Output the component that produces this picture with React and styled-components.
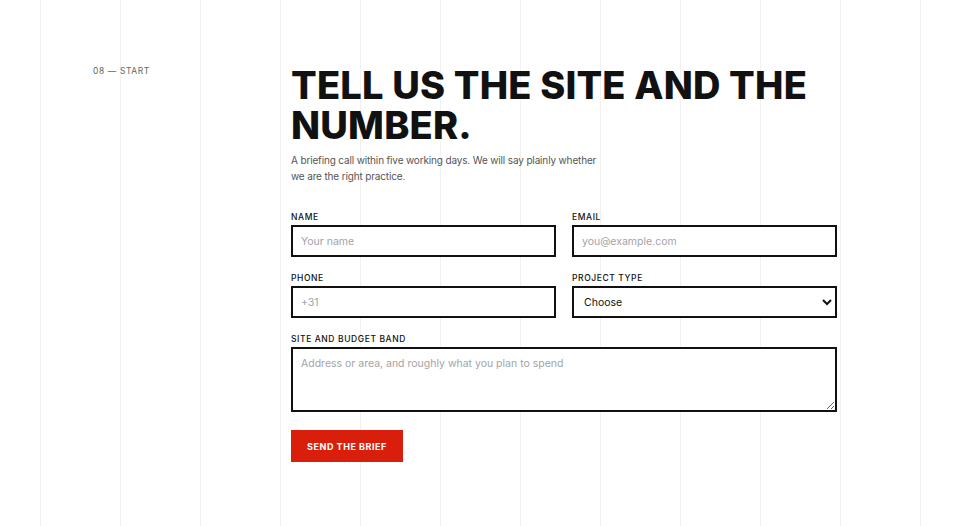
import React from "react";
import styled, { createGlobalStyle } from "styled-components";

const GlobalStyle = createGlobalStyle`
  * { box-sizing: border-box; }
  html, body { margin: 0; padding: 0; }
  body {
    background-color: #fff;
    background-image: repeating-linear-gradient(
      to right,
      #f1f1f1 0,
      #f1f1f1 1px,
      transparent 1px,
      transparent 80px
    );
    background-position: 40px 0;
    background-size: 881px 100%;
    background-repeat: no-repeat;
    font-family: "Inter", "Liberation Sans", sans-serif;
    color: #111;
    min-height: 526px;
  }
`;

const Page = styled.section`
  display: flex;
  padding: 65px 0 0 93px;
`;

const Eyebrow = styled.div`
  width: 198px;
  flex-shrink: 0;
  font-size: 8.5px;
  letter-spacing: 0.07em;
  color: #666;
  line-height: 12px;
`;

const Main = styled.div`
  width: 546px;
`;

const Title = styled.h1`
  margin: 0;
  font-family: "Inter", "Liberation Sans", sans-serif;
  font-weight: 800;
  font-size: 38px;
  line-height: 40px;
  letter-spacing: 0.005em;
  color: #111;
  text-transform: uppercase;
`;

const Lead = styled.p`
  margin: 7px 0 0;
  max-width: 310px;
  font-size: 10px;
  line-height: 16px;
  letter-spacing: -0.015em;
  color: #555;
`;

const Form = styled.form`
  margin-top: 27px;
  display: grid;
  grid-template-columns: 1fr 1fr;
  column-gap: 16px;
  row-gap: 15px;
`;

const Field = styled.label`
  display: flex;
  flex-direction: column;
  gap: 2px;
  grid-column: ${({ wide }) => (wide ? "1 / -1" : "auto")};
`;

const Label = styled.span`
  font-size: 8.5px;
  line-height: 12px;
  letter-spacing: 0.07em;
  font-weight: 500;
  color: #111;
`;

const Input = styled.input`
  height: 32px;
  border: 2px solid #111;
  border-radius: 0;
  padding: 0 8px;
  font-family: inherit;
  font-size: 10.5px;
  color: #111;
  background: #fff;
  outline: none;
  &::placeholder { color: #a3a3a8; }
`;

const Select = styled.select`
  height: 32px;
  border: 2px solid #111;
  border-radius: 0;
  padding: 0 6px;
  font-family: inherit;
  font-size: 10.5px;
  color: #111;
  background: #fff;
  outline: none;
`;

const TextArea = styled.textarea`
  height: 65px;
  border: 2px solid #111;
  border-radius: 0;
  padding: 8px 8px;
  font-family: inherit;
  font-size: 10.5px;
  line-height: 14px;
  color: #111;
  background: #fff;
  outline: none;
  resize: vertical;
  &::placeholder { color: #a3a3a8; }
`;

const Submit = styled.button`
  margin-top: 3px;
  justify-self: start;
  width: 112px;
  height: 32px;
  border: none;
  border-radius: 0;
  background: #d91f0b;
  color: #fff;
  font-family: inherit;
  font-size: 9px;
  font-weight: 700;
  letter-spacing: 0.06em;
  cursor: pointer;
`;

export default function App() {
  return (
    <>
      <GlobalStyle />
      <Page>
        <Eyebrow>08 — START</Eyebrow>
        <Main>
          <Title>
            Tell us the site and the
            <br />
            number.
          </Title>
          <Lead>
            A briefing call within five working days. We will say plainly
            whether we are the right practice.
          </Lead>
          <Form onSubmit={(e) => e.preventDefault()}>
            <Field>
              <Label>NAME</Label>
              <Input type="text" placeholder="Your name" />
            </Field>
            <Field>
              <Label>EMAIL</Label>
              <Input type="email" placeholder="you@example.com" />
            </Field>
            <Field>
              <Label>PHONE</Label>
              <Input type="tel" placeholder="+31" />
            </Field>
            <Field>
              <Label>PROJECT TYPE</Label>
              <Select defaultValue="">
                <option value="">Choose</option>
                <option value="house">House</option>
                <option value="renovation">Renovation</option>
                <option value="extension">Extension</option>
              </Select>
            </Field>
            <Field wide>
              <Label>SITE AND BUDGET BAND</Label>
              <TextArea placeholder="Address or area, and roughly what you plan to spend" />
            </Field>
            <Submit type="submit">SEND THE BRIEF</Submit>
          </Form>
        </Main>
      </Page>
    </>
  );
}
